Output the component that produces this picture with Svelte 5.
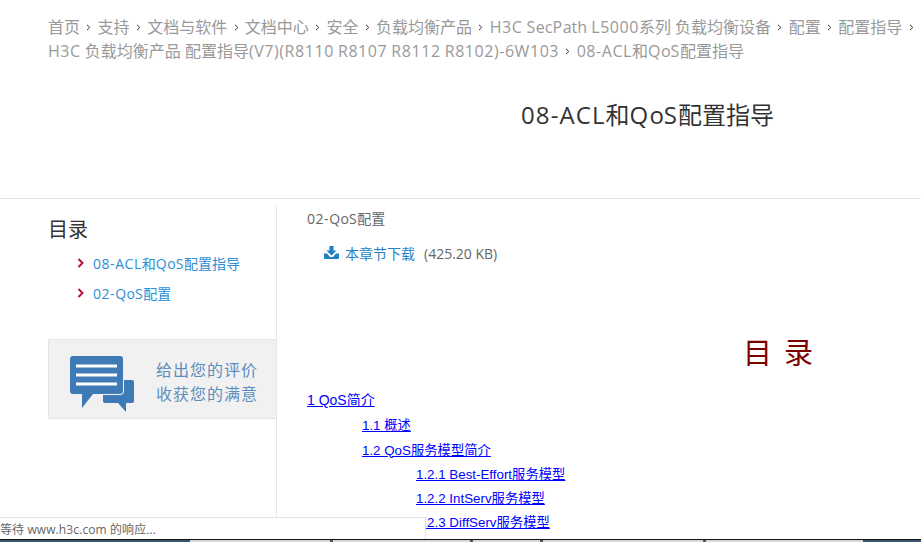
<script>
  const crumbs = [
    '首页', '支持', '文档与软件', '文档中心', '安全', '负载均衡产品',
    'H3C SecPath L5000系列 负载均衡设备', '配置', '配置指导',
    'H3C 负载均衡产品 配置指导(V7)(R8110 R8107 R8112 R8102)-6W103',
    '08-ACL和QoS配置指导',
  ];
  const chapters = ['08-ACL和QoS配置指导', '02-QoS配置'];
  const toc = [
    { text: '1 QoS简介', level: 0 },
    { text: '1.1 概述', level: 1 },
    { text: '1.2 QoS服务模型简介', level: 1 },
    { text: '1.2.1 Best-Effort服务模型', level: 2 },
    { text: '1.2.2 IntServ服务模型', level: 2 },
    { text: '1.2.3 DiffServ服务模型', level: 2 },
  ];
  const taskbar = [
    { w: 190, c: '#3b5672' }, { w: 140, c: '#d5dade' }, { w: 3, c: '#555' },
    { w: 137, c: '#d5dade' }, { w: 3, c: '#555' }, { w: 67, c: '#d5dade' },
    { w: 3, c: '#555' }, { w: 160, c: '#d5dade' }, { w: 3, c: '#555' },
    { w: 157, c: '#d5dade' }, { w: 58, c: '#3b5672' },
  ];

  // caps, digits and punctuation run a bit wide in the original rendering
  function runs(text) {
    return text.match(/[0-9A-Z()\-]+|[^0-9A-Z()\-]+/g).map((s) => ({
      s,
      wide: /^[0-9A-Z()\-]/.test(s),
    }));
  }
</script>

{#snippet rich(text)}{#each runs(text) as r}{#if r.wide}<span class="wide">{r.s}</span>{:else}{r.s}{/if}{/each}{/snippet}

<div class="page">
  <nav class="crumbs">
    {#each crumbs as c, i}
      <span class="crumb">{@render rich(c)}</span>{#if i < crumbs.length - 1}<span class="sep"><svg width="5" height="7" viewBox="0 0 5 7"><path d="M1 .8 3.800 3.500 1 6.200" fill="none" stroke="#333" stroke-width="1"/></svg></span>{/if}
    {/each}
  </nav>

  <h1>{@render rich('08-ACL和QoS配置指导')}</h1>

  <div class="body">
    <aside>
      <h2>目录</h2>
      <ul>
        {#each chapters as c}
          <li>
            <svg width="7" height="10" viewBox="0 0 7 10"><path d="M1.500 1 5.500 5 1.500 9" fill="none" stroke="#b5133f" stroke-width="2"/></svg>
            <a href="#top">{@render rich(c)}</a>
          </li>
        {/each}
      </ul>
      <div class="rate">
        <svg width="65" height="57" viewBox="0 0 65 57">
          <path d="M35 24h27a2 2 0 0 1 2 2v19a2 2 0 0 1-2 2h-6v9l-8-9H35a2 2 0 0 1-2-2V26a2 2 0 0 1 2-2z" fill="#3e7ab5"/>
          <path d="M3 0h47a3 3 0 0 1 3 3v32a3 3 0 0 1-3 3H23L12 52V38H3a3 3 0 0 1-3-3V3a3 3 0 0 1 3-3z" fill="#3e7ab5" stroke="#f1f1f1" stroke-width="2" paint-order="stroke"/>
          <path d="M6 10h41M6 19h41M6 28h41" stroke="#fff" stroke-width="3"/>
        </svg>
        <div class="rate-text">给出您的评价<br />收获您的满意</div>
      </div>
    </aside>

    <main>
      <div class="chapter">{@render rich('02-QoS配置')}</div>
      <div class="download">
        <svg width="15" height="13" viewBox="0 0 15 13">
          <path d="M5.500 0h4v4.500h3L7.500 9.500 2.500 4.500h3z" fill="#1f7fc4"/>
          <path d="M0 7.500h3l3 3.500h3l3-3.500h3V12a1 1 0 0 1-1 1H1a1 1 0 0 1-1-1z" fill="#1f7fc4"/>
        </svg>
        <a href="#top">本章节下载</a>
        <span class="size">(425.20 KB)</span>
      </div>
      <div class="toc-title">目&nbsp;录</div>
      <div class="toc">
        {#each toc as t}
          <p class="l{t.level}"><a href="#top">{t.text}</a></p>
        {/each}
      </div>
    </main>
  </div>

  <footer class="status">等待 www.h3c.com 的响应...</footer>
  <div class="taskbar">
    {#each taskbar as seg}
      <span style="width: {seg.w}px; background: {seg.c}"></span>
    {/each}
  </div>
</div>

<style>
  :global(body) {
    margin: 0;
    background: #fff;
    overflow: hidden;
  }
  .page {
    position: relative;
    width: 921px;
    height: 542px;
    overflow: hidden;
    font-family: "Open Sans", "Noto Sans CJK SC", sans-serif;
  }
  .wide {
    letter-spacing: 0.55px;
  }
  .crumbs {
    padding: 15px 0 0 48px;
    height: 74px;
    font-size: 16px;
    line-height: 24px;
    color: #999;
    display: flex;
    flex-wrap: wrap;
    align-content: flex-start;
    align-items: center;
  }
  .sep {
    display: inline-flex;
    width: 17.6px;
    justify-content: center;
  }
  h1 {
    margin: 1px 0 0;
    height: 108px;
    padding: 0 0 0 521px;
    font-size: 24px;
    font-weight: 400;
    line-height: 50px;
    color: #333;
    border-bottom: 1px solid #e5e5e5;
  }
  h1 .wide {
    letter-spacing: 1.1px;
  }
  .body {
    display: flex;
    margin-top: 7px;
  }
  aside {
    width: 228px;
    margin-left: 48px;
    border-right: 1px solid #e5e5e5;
    height: 340px;
  }
  h2 {
    margin: 10px 0 0;
    font-size: 20px;
    font-weight: 400;
    line-height: 27px;
    color: #333;
  }
  ul {
    list-style: none;
    margin: 5px 0 0;
    padding: 0 0 0 29px;
  }
  li {
    display: flex;
    align-items: center;
    gap: 9px;
    height: 30px;
    font-size: 14px;
  }
  li a {
    color: #2a8fd6;
    text-decoration: none;
  }
  .rate {
    display: flex;
    align-items: center;
    gap: 21px;
    margin-top: 31px;
    height: 78px;
    padding-left: 21px;
    background: #f1f1f1;
    border: 1px solid #e5e5e5;
    border-right: none;
  }
  .rate svg {
    margin-top: 10px;
  }
  .rate-text {
    margin-top: 6px;
    font-size: 16px;
    line-height: 24.5px;
    letter-spacing: 1px;
    color: #5b8dbd;
  }
  main {
    flex: 1;
    padding-left: 30px;
    min-width: 0;
  }
  .chapter {
    margin-top: 1px;
    font-size: 14px;
    line-height: 24px;
    color: #666;
  }
  .download {
    display: flex;
    align-items: center;
    gap: 6px;
    margin: 10px 0 0 17px;
    height: 24px;
    font-size: 14px;
  }
  .download svg {
    margin-top: -2px;
  }
  .download a {
    color: #2a7fc0;
    text-decoration: none;
  }
  .size {
    color: #666;
    margin-left: 3px;
  }
  .toc-title {
    margin: 69px 0 0 436px;
    font-size: 29px;
    line-height: 40px;
    letter-spacing: 2px;
    color: #7b0000;
    font-family: "Liberation Sans", "Noto Sans CJK SC", sans-serif;
  }
  .toc {
    margin-top: 14px;
    font-family: "Liberation Sans", "Noto Sans CJK SC", sans-serif;
    font-size: 13.33px;
  }
  .toc p {
    margin: 0;
    line-height: 24px;
  }
  .toc a {
    color: #00f;
    text-decoration: underline;
  }
  .l0 { height: 26px; font-size: 14px; }
  .l1 { height: 24.5px; padding-left: 55px; }
  .l2 { height: 24px; padding-left: 109px; }
  .status {
    position: absolute;
    left: 0;
    bottom: 3px;
    width: 425px;
    height: 21px;
    line-height: 23px;
    font-size: 12px;
    letter-spacing: 0.1px;
    color: #666;
    background: #fff;
    border-top: 1px solid #e1e1e1;
    border-right: 1px solid #e1e1e1;
  }
  .taskbar {
    position: absolute;
    left: 0;
    right: 0;
    bottom: 0;
    height: 2px;
    display: flex;
    border-top: 1px solid #111;
  }
  .taskbar span {
    display: block;
    height: 2px;
  }
</style>
